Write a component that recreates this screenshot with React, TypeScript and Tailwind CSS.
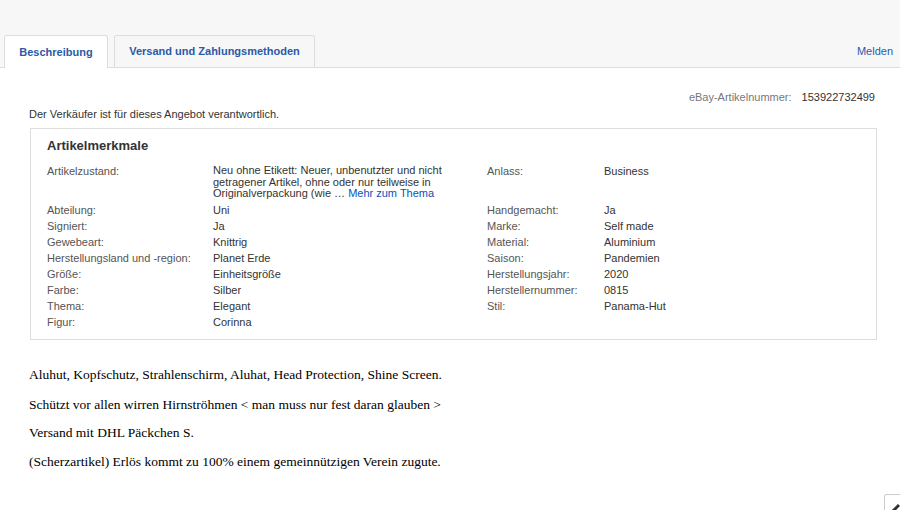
import React from "react";

const leftRows: [string, React.ReactNode][] = [
  [
    "Artikelzustand:",
    <span className="leading-[11.5px] block">
      Neu ohne Etikett: Neuer, unbenutzter und nicht
      <br />
      getragener Artikel, ohne oder nur teilweise in
      <br />
      Originalverpackung (wie …{" "}
      <a className="text-[#0654ba]">Mehr zum Thema</a>
    </span>,
  ],
  ["Abteilung:", "Uni"],
  ["Signiert:", "Ja"],
  ["Gewebeart:", "Knittrig"],
  ["Herstellungsland und -region:", "Planet Erde"],
  ["Größe:", "Einheitsgröße"],
  ["Farbe:", "Silber"],
  ["Thema:", "Elegant"],
  ["Figur:", "Corinna"],
];

const rightRows: [string, string][] = [
  ["Anlass:", "Business"],
  ["Handgemacht:", "Ja"],
  ["Marke:", "Self made"],
  ["Material:", "Aluminium"],
  ["Saison:", "Pandemien"],
  ["Herstellungsjahr:", "2020"],
  ["Herstellernummer:", "0815"],
  ["Stil:", "Panama-Hut"],
];

const App: React.FC = () => {
  return (
    <div className="w-[900px] h-[510px] overflow-hidden bg-white font-['Liberation_Sans',Arial,sans-serif] relative">
      {/* Tabs header */}
      <div className="h-[68px] bg-[#f7f7f7] border-b border-[#dddddd] flex items-end px-[4px]">
        <div className="w-[104px] h-[33px] -mb-px bg-white border border-b-0 border-[#dddddd] rounded-t-[3px] flex items-center justify-center text-[11px] font-bold text-[#2a5aa8]">
          Beschreibung
        </div>
        <div className="w-[201px] h-[32px] ml-[6px] bg-[#f7f7f7] border border-b-0 border-[#dddddd] rounded-t-[3px] flex items-center justify-center text-[11px] font-bold text-[#2a5aa8]">
          Versand und Zahlungsmethoden
        </div>
        <div className="flex-1" />
        <div className="self-start mt-[43px] mr-[3px] text-[11px] text-[#2a5aa8]">Melden</div>
      </div>

      {/* Content */}
      <div className="px-[29px]">
        <div className="flex justify-end text-[11px] pt-[23px] -mr-[5px] leading-[13px]">
          <span className="text-[#777777]">eBay-Artikelnummer:</span>
          <span className="ml-[10px] mr-[1px] text-[#333333]">153922732499</span>
        </div>
        <div className="text-[11px] text-[#333333] leading-[13px] mt-[4px]">
          Der Verkäufer ist für dieses Angebot verantwortlich.
        </div>

        <div className="mt-[7px] ml-px w-[847px] h-[212px] border border-[#dddddd] px-[16px] pt-[9px]">
          <div className="text-[13px] font-bold text-[#333333] leading-[16px]">Artikelmerkmale</div>
          <div className="flex mt-[11px] text-[11px] leading-[12px]">
            <div className="w-[440px]">
              {leftRows.map(([k, v], i) => (
                <div key={i} className="flex mb-[4px]">
                  <div className="w-[166px] text-[#555555]">{k}</div>
                  <div className="flex-1 text-[#333333]">{v}</div>
                </div>
              ))}
            </div>
            <div className="flex-1">
              {rightRows.map(([k, v], i) => (
                <div key={i} className={`flex mb-[4px] ${i === 0 ? "h-[34.5px]" : ""}`}>
                  <div className="w-[117px] text-[#555555]">{k}</div>
                  <div className="flex-1 text-[#333333]">{v}</div>
                </div>
              ))}
            </div>
          </div>
        </div>

        <div className="mt-[27px] font-['Liberation_Serif','Times_New_Roman',serif] text-[13.5px] text-black leading-[16px]">
          <p className="mb-[14px]">Aluhut, Kopfschutz, Strahlenschirm, Aluhat, Head Protection, Shine Screen.</p>
          <p className="mb-[12px]">Schützt vor allen wirren Hirnströhmen &lt; man muss nur fest daran glauben &gt;</p>
          <p className="mb-[13px]">Versand mit DHL Päckchen S.</p>
          <p>(Scherzartikel) Erlös kommt zu 100% einem gemeinnützigen Verein zugute.</p>
        </div>
      </div>

      {/* scroll-to-top button, cut off at the corner */}
      <div className="absolute left-[884px] top-[494px] w-[30px] h-[30px] bg-white border border-[#cccccc] rounded-[2px]">
        <svg width="16" height="16" viewBox="0 0 16 16" className="absolute left-[4px] top-[4px]">
          <path d="M2 14 L10 6" stroke="#333" strokeWidth="3" fill="none" />
        </svg>
      </div>
    </div>
  );
};

export default App;
